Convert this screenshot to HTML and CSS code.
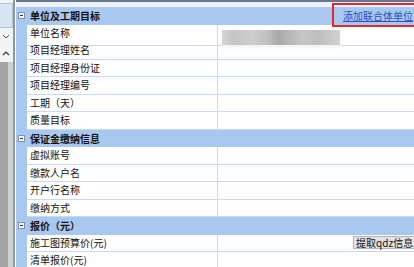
FILE: index.html
```html
<!DOCTYPE html>
<html lang="zh">
<head>
<meta charset="utf-8">
<link rel="stylesheet" href="styles.css">
</head>
<body>
<div class="side">
  <div class="tab"></div>
  <svg class="chev" width="13" height="10" viewBox="0 0 13 10"><polyline points="3,3 6,6 9,3" fill="none" stroke="#555" stroke-width="1"/></svg>
  <svg class="chev up" width="13" height="10" viewBox="0 0 13 10"><polyline points="3,6 6,3 9,6" fill="none" stroke="#333" stroke-width="1.2"/></svg>
  <div class="track"><div class="dark"></div><div class="light"></div></div>
</div>
<div class="main">
  <div class="topbar"></div>
  <div class="hdr"><span class="gut"><i class="tog"></i></span><span class="htxt">单位及工期目标</span><span class="hval"><a class="link">添加联合体单位</a></span></div>
  <div class="row"><span class="gut"></span><span class="lbl">单位名称</span><span class="val"><span class="blur"></span></span></div>
  <div class="row"><span class="gut"></span><span class="lbl">项目经理姓名</span><span class="val"></span></div>
  <div class="row"><span class="gut"></span><span class="lbl">项目经理身份证</span><span class="val"></span></div>
  <div class="row"><span class="gut"></span><span class="lbl">项目经理编号</span><span class="val"></span></div>
  <div class="row"><span class="gut"></span><span class="lbl">工期（天）</span><span class="val"></span></div>
  <div class="row"><span class="gut"></span><span class="lbl">质量目标</span><span class="val"></span></div>
  <div class="hdr"><span class="gut"><i class="tog"></i></span><span class="htxt">保证金缴纳信息</span><span class="hval"></span></div>
  <div class="row"><span class="gut"></span><span class="lbl">虚拟账号</span><span class="val"></span></div>
  <div class="row"><span class="gut"></span><span class="lbl">缴款人户名</span><span class="val"></span></div>
  <div class="row"><span class="gut"></span><span class="lbl">开户行名称</span><span class="val"></span></div>
  <div class="row"><span class="gut"></span><span class="lbl">缴纳方式</span><span class="val"></span></div>
  <div class="hdr"><span class="gut"><i class="tog"></i></span><span class="htxt">报价（元）</span><span class="hval"></span></div>
  <div class="row"><span class="gut"></span><span class="lbl">施工图预算价(元)</span><span class="val"><button class="btn">提取qdz信息</button></span></div>
  <div class="row"><span class="gut"></span><span class="lbl">清单报价(元)</span><span class="val"></span></div>
</div>
<div class="mark"></div>
</body>
</html>
```

FILE: styles.css
```css
html, body {
  margin: 0;
  padding: 0;
}
body {
  width: 414px;
  height: 267px;
  overflow: hidden;
  display: flex;
  position: relative;
  font-family: "Noto Sans CJK SC", "Noto Sans", sans-serif;
  font-size: 10px;
  color: #111;
  background: #fff;
}
.side {
  width: 13px;
  flex: none;
  background: #f2f3f5;
  display: flex;
  flex-direction: column;
}
.tab {
  margin-top: 3px;
  height: 23px;
  background: #d9e4f3;
  border: 1px solid #b3c1d5;
  border-left: none;
}
.chev {
  display: block;
  margin-top: 4px;
}
.chev.up {
  margin-top: 7px;
}
.track {
  flex: 1;
  margin-top: 3px;
  display: flex;
}
.dark {
  width: 8px;
  background: #a3a3a3;
}
.light {
  flex: 1;
  background: #d0d0d0;
}
.main {
  flex: 1;
  border-left: 2px solid #8b97ab;
  padding-left: 1px;
  background: #fff;
  min-width: 0;
}
.topbar {
  height: 7px;
  box-sizing: border-box;
  border-top: 2px solid #667791;
  background: #eef1f6;
}
.hdr, .row {
  display: grid;
  grid-template-columns: 11px 190px 1fr;
  height: 17.5px;
}
.hdr {
  background: #a9c8ef;
}
.gut {
  background: #a9c8ef;
  position: relative;
}
.tog {
  position: absolute;
  left: 2px;
  top: 5px;
  width: 7px;
  height: 7px;
  box-sizing: border-box;
  border: 1px solid #7d93b4;
  background: #f4f7fb;
}
.tog::after {
  content: "";
  position: absolute;
  left: 1px;
  top: 2px;
  width: 3px;
  height: 1px;
  background: #333;
}
.htxt {
  font-weight: bold;
  padding-left: 3px;
  line-height: 17px;
  white-space: nowrap;
}
.hval {
  padding-left: 126px;
  line-height: 17px;
  white-space: nowrap;
}
.link {
  color: #2650c4;
  text-decoration: underline;
}
.lbl {
  padding-left: 3px;
  line-height: 16.5px;
  border-bottom: 1px solid #c7daf3;
  white-space: nowrap;
}
.val {
  border-left: 1px solid #c7daf3;
  border-bottom: 1px solid #c7daf3;
  display: flex;
  align-items: center;
  min-width: 0;
}
.blur {
  display: block;
  margin-left: 4px;
  margin-top: 5px;
  width: 118px;
  height: 15px;
  position: relative;
  background: linear-gradient(90deg, #d6d6d6 0%, #c4c4c4 10%, #cdcdcd 25%, #c0c0c0 38%, #a9a9a9 48%, #b5b5b5 56%, #c5c5c5 68%, #bdbdbd 82%, #d2d2d2 100%);
  box-shadow: 0 3px 3px #f4f4f6;
}
.btn {
  margin-left: 135px;
  height: 13px;
  padding: 0 2px;
  font: inherit;
  font-size: 10px;
  line-height: 11px;
  color: #111;
  background: #e2e2e2;
  border: 1px solid #b5b5b5;
  border-radius: 0;
  white-space: nowrap;
}
.mark {
  position: absolute;
  left: 332px;
  top: 3px;
  width: 100px;
  height: 24px;
  box-sizing: border-box;
  border: 2px solid #e5262c;
}
```
